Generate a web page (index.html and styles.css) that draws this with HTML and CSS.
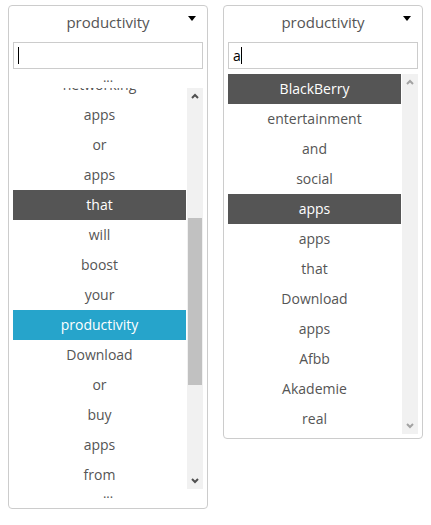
FILE: index.html
```html
<!DOCTYPE html>
<html lang="en">
<head>
    <meta charset="UTF-8">
    <title>Combo select</title>
    <link rel="stylesheet" href="styles.css">
</head>
<body>
    <div class="combo">
        <div class="combo-head">productivity<span class="caret"></span></div>
        <div class="search">
            <input type="text" value="">
            <span class="cursor cursor-empty"></span>
        </div>
        <div class="more more-top">...</div>
        <div class="list-wrap tall">
            <ul class="options" id="leftList">
                <li>Discover</li>
                <li>the</li>
                <li>latest</li>
                <li>BlackBerry</li>
                <li>apps</li>
                <li>for</li>
                <li>games</li>
                <li>and</li>
                <li>social</li>
                <li>networking</li>
                <li>apps</li>
                <li>or</li>
                <li>apps</li>
                <li class="hover">that</li>
                <li>will</li>
                <li>boost</li>
                <li>your</li>
                <li class="selected">productivity</li>
                <li>Download</li>
                <li>or</li>
                <li>buy</li>
                <li>apps</li>
                <li>from</li>
                <li>BlackBerry</li>
                <li>World</li>
                <li>and</li>
                <li>get</li>
                <li>started</li>
                <li>right</li>
                <li>away</li>
            </ul>
            <div class="scrollbar">
                <div class="sb-btn">
                    <svg width="8" height="6" viewBox="0 0 8 6"><path d="M1 5 L4 2 L7 5" fill="none" stroke="currentColor" stroke-width="2"/></svg>
                </div>
                <div class="sb-track">
                    <div class="sb-thumb" style="margin-top: 114px; height: 167px;"></div>
                </div>
                <div class="sb-btn">
                    <svg width="8" height="6" viewBox="0 0 8 6"><path d="M1 1 L4 4 L7 1" fill="none" stroke="currentColor" stroke-width="2"/></svg>
                </div>
            </div>
        </div>
        <div class="more more-bottom">...</div>
    </div>

    <div class="combo">
        <div class="combo-head">productivity<span class="caret"></span></div>
        <div class="search">
            <input type="text" value="a">
            <span class="cursor cursor-after"></span>
        </div>
        <div class="list-wrap short">
            <ul class="options">
                <li class="hover">BlackBerry</li>
                <li>entertainment</li>
                <li>and</li>
                <li>social</li>
                <li class="hover">apps</li>
                <li>apps</li>
                <li>that</li>
                <li>Download</li>
                <li>apps</li>
                <li>Afbb</li>
                <li>Akademie</li>
                <li>real</li>
            </ul>
            <div class="scrollbar disabled">
                <div class="sb-btn">
                    <svg width="8" height="6" viewBox="0 0 8 6"><path d="M1 5 L4 2 L7 5" fill="none" stroke="currentColor" stroke-width="2"/></svg>
                </div>
                <div class="sb-track"></div>
                <div class="sb-btn">
                    <svg width="8" height="6" viewBox="0 0 8 6"><path d="M1 1 L4 4 L7 1" fill="none" stroke="currentColor" stroke-width="2"/></svg>
                </div>
            </div>
        </div>
    </div>

    <script>
        // keep the long list scrolled near the selected word
        document.getElementById('leftList').scrollTop = 288;
    </script>
</body>
</html>
```

FILE: styles.css
```css
body {
    margin: 5px 8px;
    font-family: 'Open Sans', 'Liberation Sans', sans-serif;
    font-size: 14px;
    color: #555;
    background: #fff;
    display: flex;
    align-items: flex-start;
    gap: 15px;
}
.combo {
    width: 190px;
    padding: 0 4px 4px;
    border: 1px solid #ccc;
    border-radius: 4px;
    background: #fff;
}
.combo-head {
    position: relative;
    height: 36px;
    line-height: 32px;
    text-align: center;
    font-size: 15px;
}
.caret {
    position: absolute;
    right: 7px;
    top: 10px;
    width: 0;
    height: 0;
    border-left: 4px solid transparent;
    border-right: 4px solid transparent;
    border-top: 5px solid #000;
}
.search {
    position: relative;
}
.search input {
    display: block;
    box-sizing: border-box;
    width: 100%;
    height: 27px;
    margin: 0;
    padding: 0 4px;
    border: 1px solid #ccc;
    font-family: 'Open Sans', 'Liberation Sans', sans-serif;
    font-size: 14px;
    color: #000;
    outline: none;
}
.cursor {
    position: absolute;
    top: 5px;
    width: 1px;
    height: 17px;
    background: #000;
}
.cursor-empty {
    left: 5px;
}
.cursor-after {
    left: 13px;
}
.more {
    text-align: center;
    font-size: 13px;
    color: #555;
    overflow: hidden;
}
.more-top {
    height: 19px;
    line-height: 17px;
}
.more-bottom {
    height: 15px;
    line-height: 8px;
}
.list-wrap {
    display: flex;
}
.list-wrap.tall {
    height: 401px;
}
.list-wrap.short {
    height: 360px;
    margin-top: 5px;
}
.options {
    flex: 1;
    list-style: none;
    margin: 0 1px 0 0;
    padding: 0;
    overflow: hidden;
}
.options li {
    height: 30px;
    line-height: 30px;
    text-align: center;
    white-space: nowrap;
}
.options li.hover {
    background: #555;
    color: #fff;
}
.options li.selected {
    background: #26a4cb;
    color: #fff;
}
.scrollbar {
    width: 16px;
    display: flex;
    flex-direction: column;
    background: #f1f1f1;
    color: #505050;
}
.scrollbar.disabled {
    color: #a3a3a3;
}
.sb-btn {
    height: 16px;
    display: flex;
    align-items: center;
    justify-content: center;
}
.sb-btn svg {
    display: block;
}
.sb-track {
    flex: 1;
    padding: 0 1px;
}
.sb-thumb {
    background: #c1c1c1;
}
```
